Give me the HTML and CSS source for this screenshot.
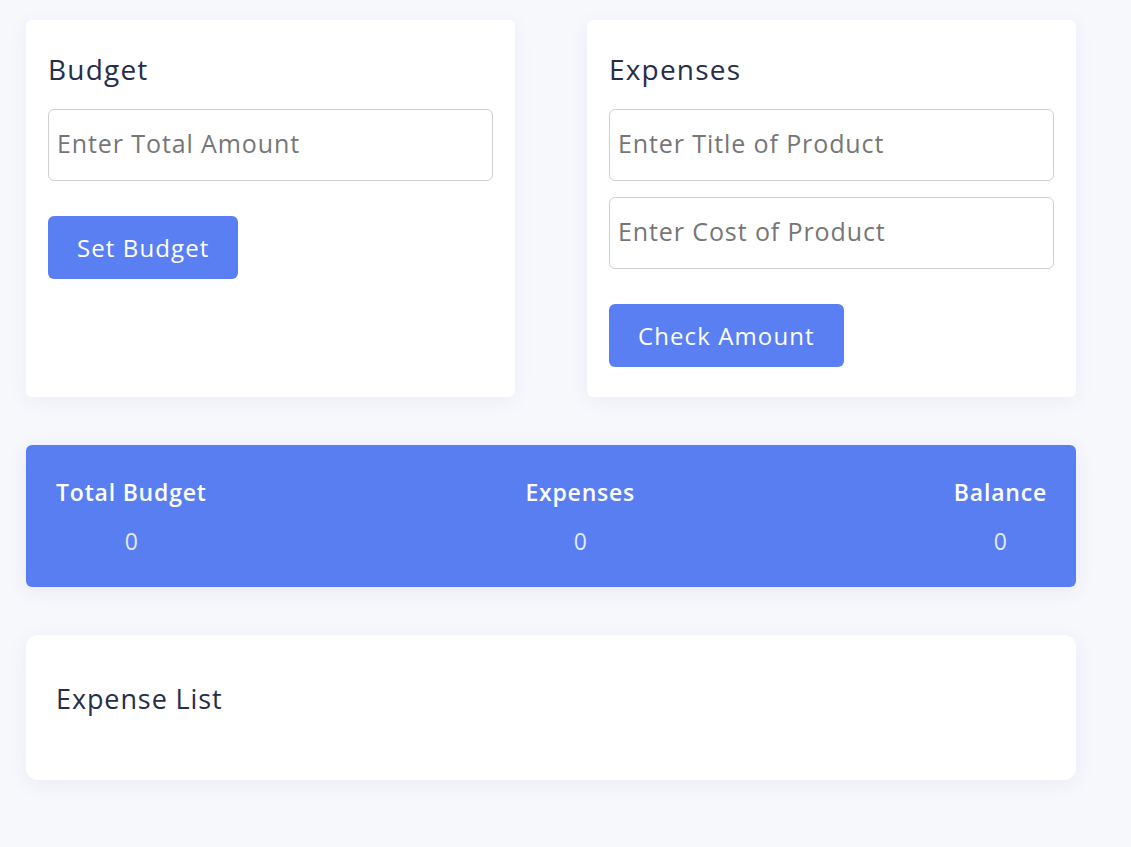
FILE: index.html
```html
<!DOCTYPE html>
<html lang="en">
<head>
<meta charset="utf-8">
<title>Budget App</title>
<link rel="stylesheet" href="styles.css">
</head>
<body>
<div class="wrapper">
  <div class="top-row">
    <section class="card">
      <h3 class="card-title">Budget</h3>
      <input class="field" type="number" placeholder="Enter Total Amount">
      <button class="btn">Set Budget</button>
    </section>
    <section class="card">
      <h3 class="card-title">Expenses</h3>
      <input class="field" type="text" placeholder="Enter Title of Product">
      <input class="field field-next" type="number" placeholder="Enter Cost of Product">
      <button class="btn">Check Amount</button>
    </section>
  </div>
  <div class="summary">
    <div class="stat">
      <p class="stat-label">Total Budget</p>
      <span class="stat-value">0</span>
    </div>
    <div class="stat">
      <p class="stat-label">Expenses</p>
      <span class="stat-value">0</span>
    </div>
    <div class="stat">
      <p class="stat-label">Balance</p>
      <span class="stat-value">0</span>
    </div>
  </div>
  <section class="list-card">
    <h3 class="list-title">Expense List</h3>
  </section>
</div>
</body>
</html>
```
FILE: styles.css
```css
* {
  box-sizing: border-box;
}
body {
  margin: 0;
  background: #f7f8fc;
  font-family: "Open Sans", "Noto Sans", sans-serif;
  color: #2d3250;
}
.wrapper {
  width: 1102px;
  padding: 20px 26px;
}
.top-row {
  display: grid;
  grid-template-columns: 489px 489px;
  column-gap: 72px;
}
.card {
  background: #ffffff;
  border-radius: 6px;
  padding: 31px 22px 30px;
  box-shadow: 0 4px 20px rgba(60, 70, 130, 0.06);
  display: flex;
  flex-direction: column;
  align-items: flex-start;
}
.card-title {
  margin: 0 0 22px;
  font-size: 28px;
  font-weight: 500;
  letter-spacing: 1.2px;
  line-height: 36px;
  color: #282d48;
}
.field {
  width: 100%;
  height: 72px;
  border: 1px solid #cfcfcf;
  border-radius: 6px;
  padding: 0 8px 4px;
  font-family: inherit;
  font-size: 25px;
  letter-spacing: 0.9px;
  color: #333;
  background: #fff;
  outline: none;
}
.field::placeholder {
  color: #767676;
}
.field-next {
  margin-top: 16px;
}
.btn {
  margin-top: 35px;
  height: 63px;
  padding: 0 29px 1px;
  border: none;
  border-radius: 6px;
  background: #5a7ff2;
  color: #ffffff;
  font-family: inherit;
  font-size: 24px;
  letter-spacing: 1.1px;
  cursor: pointer;
}
.summary {
  margin-top: 48px;
  height: 142px;
  background: #587ef2;
  border-radius: 6px;
  padding: 0 29px 0 30px;
  display: flex;
  justify-content: space-between;
  align-items: center;
  box-shadow: 0 4px 20px rgba(60, 70, 130, 0.08);
}
.stat {
  display: flex;
  flex-direction: column;
  align-items: center;
  gap: 19px;
}
.stat-label {
  margin: 0;
  color: #ffffff;
  font-size: 23px;
  font-weight: 600;
  letter-spacing: 0.8px;
  line-height: 30px;
}
.stat-value {
  color: #e4e9fb;
  font-size: 23px;
  line-height: 30px;
}
.list-card {
  margin-top: 48px;
  height: 145px;
  background: #ffffff;
  border-radius: 12px;
  padding: 46px 30px;
  box-shadow: 0 4px 20px rgba(60, 70, 130, 0.07);
}
.list-title {
  margin: 0;
  font-size: 27px;
  font-weight: 500;
  letter-spacing: 0.9px;
  line-height: 36px;
  color: #282d48;
}
```
